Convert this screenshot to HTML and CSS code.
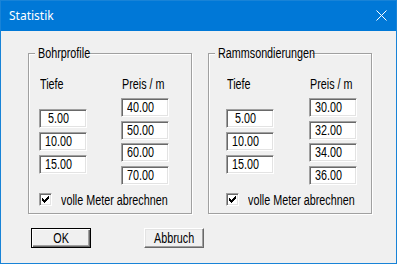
FILE: index.html
```html
<!DOCTYPE html>
<html lang="de">
<head>
<meta charset="utf-8">
<title>Statistik</title>
<link rel="stylesheet" href="styles.css">
</head>
<body>
<div class="window">
  <div class="titlebar">
    <span class="title">Statistik</span>
    <svg class="close" width="11" height="11" viewBox="0 0 11 11"><path d="M0.5 0.5L10.5 10.5M10.5 0.5L0.5 10.5" stroke="#fff" stroke-width="1"/></svg>
  </div>
  <div class="content">
    <div class="groups">
      <section class="group g1">
        <span class="legend"><span class="t">Bohrprofile</span></span>
        <div class="cols">
          <div class="col depth">
            <span class="label"><span class="t">Tiefe</span></span>
            <div class="fields">
              <span class="field"><span class="t">&nbsp;5.00</span></span>
              <span class="field"><span class="t">10.00</span></span>
              <span class="field"><span class="t">15.00</span></span>
            </div>
          </div>
          <div class="col price">
            <span class="label"><span class="t">Preis / m</span></span>
            <div class="fields">
              <span class="field"><span class="t">40.00</span></span>
              <span class="field"><span class="t">50.00</span></span>
              <span class="field"><span class="t">60.00</span></span>
              <span class="field"><span class="t">70.00</span></span>
            </div>
          </div>
        </div>
        <div class="check">
          <span class="box"><svg width="7" height="7" viewBox="0 0 7 7"><path d="M0 2h1v1h1v1h1v-1h1v-1h1v-1h1v-1h1v3h-1v1h-1v1h-1v1h-1v1h-1v-1h-1v-1h-1z" fill="#000"/></svg></span>
          <span class="check-label"><span class="t">volle Meter abrechnen</span></span>
        </div>
      </section>
      <section class="group g2">
        <span class="legend"><span class="t">Rammsondierungen</span></span>
        <div class="cols">
          <div class="col depth">
            <span class="label"><span class="t">Tiefe</span></span>
            <div class="fields">
              <span class="field"><span class="t">&nbsp;5.00</span></span>
              <span class="field"><span class="t">10.00</span></span>
              <span class="field"><span class="t">15.00</span></span>
            </div>
          </div>
          <div class="col price">
            <span class="label"><span class="t">Preis / m</span></span>
            <div class="fields">
              <span class="field"><span class="t">30.00</span></span>
              <span class="field"><span class="t">32.00</span></span>
              <span class="field"><span class="t">34.00</span></span>
              <span class="field"><span class="t">36.00</span></span>
            </div>
          </div>
        </div>
        <div class="check">
          <span class="box"><svg width="7" height="7" viewBox="0 0 7 7"><path d="M0 2h1v1h1v1h1v-1h1v-1h1v-1h1v-1h1v3h-1v1h-1v1h-1v1h-1v1h-1v-1h-1v-1h-1z" fill="#000"/></svg></span>
          <span class="check-label"><span class="t">volle Meter abrechnen</span></span>
        </div>
      </section>
    </div>
    <div class="buttons">
      <span class="btn default"><span class="t c">OK</span></span>
      <span class="btn"><span class="t c">Abbruch</span></span>
    </div>
  </div>
</div>
</body>
</html>
```

FILE: styles.css
```css
* { box-sizing: border-box; }
html, body { margin: 0; padding: 0; background: #f0f0f0; }
.window {
  width: 397px;
  height: 264px;
  border: 1px solid #1883d7;
  background: #f0f0f0;
  font-family: "Liberation Sans", Arial, sans-serif;
  font-size: 14px;
  color: #000;
  display: flex;
  flex-direction: column;
  white-space: nowrap;
}
.t {
  display: inline-block;
  transform: scaleX(0.77);
  transform-origin: 0 50%;
  white-space: pre;
}
.t.c { transform-origin: 50% 50%; }
.titlebar {
  height: 30px;
  background: #0078d7;
  color: #fff;
  display: flex;
  justify-content: space-between;
  align-items: flex-start;
  padding: 0 9px 0 8px;
  flex: none;
}
.title {
  font-family: "Noto Sans", sans-serif;
  font-size: 12px;
  line-height: 30px;
}
.close { margin-top: 9px; display: block; }
.content {
  padding: 22px 0 0 27px;
}
.groups {
  display: flex;
  gap: 16px;
}
.group {
  position: relative;
  width: 164px;
  height: 161px;
  border: 1px solid #a0a0a0;
  box-shadow: inset 1px 1px 0 #fff, 1px 1px 0 #fff;
  display: flex;
  flex-direction: column;
  padding: 22px 0 0 10px;
}
.g2 { padding-left: 17px; }
.legend {
  position: absolute;
  left: 6px;
  top: -9px;
  background: #f0f0f0;
  padding: 0 2px 0 3px;
  line-height: 16px;
}
.g1 .legend { width: 53px; }
.g2 .legend { width: 97px; }
.cols {
  display: flex;
  gap: 34px;
}
.g2 .cols { gap: 35px; }
.col {
  display: flex;
  flex-direction: column;
  width: 48px;
}
.label {
  line-height: 16px;
  padding-left: 1px;
}
.fields {
  display: flex;
  flex-direction: column;
}
.depth .fields { margin-top: 17px; gap: 4px; }
.price .fields { margin-top: 6px; gap: 3.67px; }
.field {
  height: 19px;
  width: 48px;
  background: #fff;
  border: 1px solid;
  border-color: #a0a0a0 #fff #fff #a0a0a0;
  box-shadow: inset 1px 1px 0 #696969, inset -1px -1px 0 #e3e3e3;
  padding-left: 5px;
  line-height: 17px;
}
.check {
  display: flex;
  align-items: center;
  gap: 9px;
  margin-top: 7px;
}
.box {
  flex: none;
  width: 13px;
  height: 13px;
  background: #fff;
  border: 1px solid;
  border-color: #a0a0a0 #fff #fff #a0a0a0;
  box-shadow: inset 1px 1px 0 #696969, inset -1px -1px 0 #e3e3e3;
  display: flex;
  align-items: center;
  justify-content: center;
}
.box svg { display: block; }
.check-label { line-height: 16px; }
.buttons {
  display: flex;
  gap: 53px;
  margin-top: 14px;
  padding-left: 3px;
}
.btn {
  width: 60px;
  height: 20px;
  border: 1px solid;
  border-color: #fff #696969 #696969 #fff;
  box-shadow: inset -1px -1px 0 #a0a0a0, inset 1px 1px 0 #e3e3e3;
  display: flex;
  align-items: center;
  justify-content: center;
  line-height: 16px;
}
.btn.default {
  border-color: #000;
  box-shadow: inset 1px 1px 0 #fff, inset -1px -1px 0 #696969, inset -2px -2px 0 #a0a0a0;
}
```
